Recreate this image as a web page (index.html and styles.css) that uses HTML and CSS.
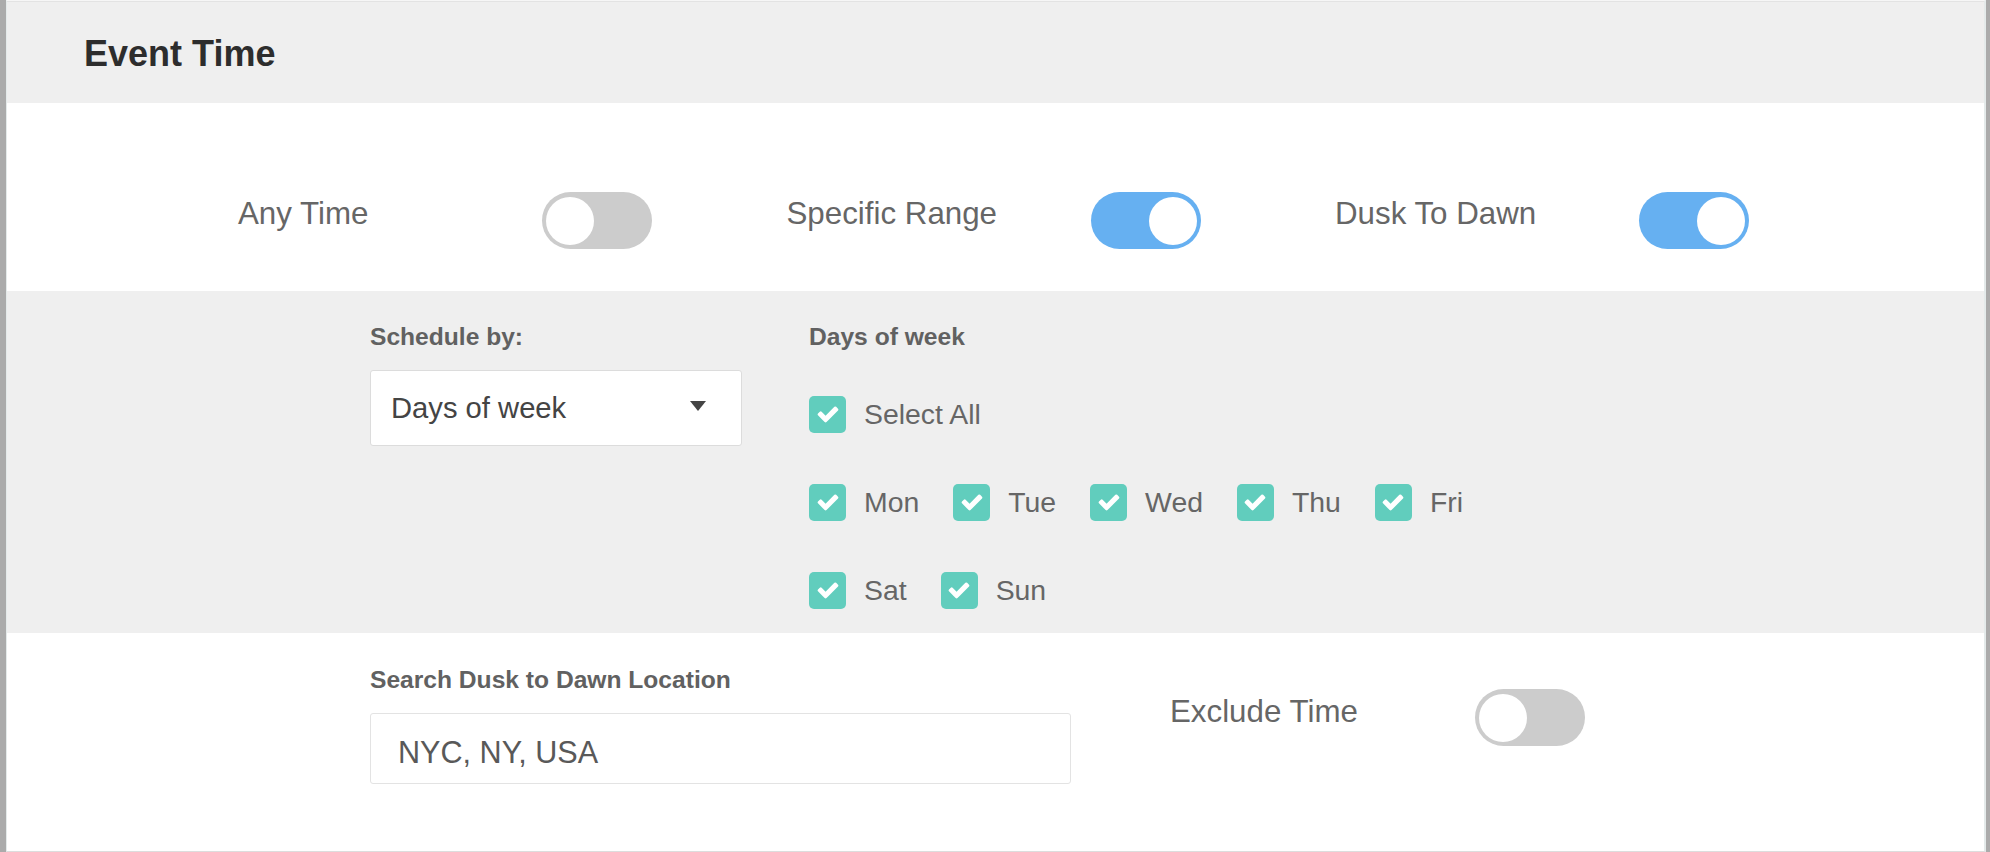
FILE: index.html
```html
<!DOCTYPE html>
<html lang="en">
<head>
<meta charset="utf-8">
<title>Event Time</title>
<link rel="stylesheet" href="styles.css">
</head>
<body>
<div class="panel">
  <div class="panel-head">
    <h2 class="title">Event Time</h2>
  </div>

  <div class="modes">
    <div class="mode">
      <span class="mode-label">Any Time</span>
      <span class="toggle"><span class="knob"></span></span>
    </div>
    <div class="mode">
      <span class="mode-label">Specific Range</span>
      <span class="toggle on"><span class="knob"></span></span>
    </div>
    <div class="mode">
      <span class="mode-label">Dusk To Dawn</span>
      <span class="toggle on"><span class="knob"></span></span>
    </div>
  </div>

  <div class="schedule">
    <div class="sched-by">
      <div class="field-label">Schedule by:</div>
      <div class="select">
        <span>Days of week</span>
        <span class="caret"></span>
      </div>
    </div>
    <div class="days">
      <div class="field-label">Days of week</div>
      <div class="check-row">
        <span class="check"><span class="box"><svg viewBox="0 0 1792 1792" class="tick"><path d="M1671 566q0 40-28 68l-724 724-136 136q-28 28-68 28t-68-28l-136-136-362-362q-28-28-28-68t28-68l136-136q28-28 68-28t68 28l294 295 656-657q28-28 68-28t68 28l136 136q28 28 28 68z"/></svg></span><span class="check-text">Select All</span></span>
      </div>
      <div class="check-row">
        <span class="check"><span class="box"><svg viewBox="0 0 1792 1792" class="tick"><path d="M1671 566q0 40-28 68l-724 724-136 136q-28 28-68 28t-68-28l-136-136-362-362q-28-28-28-68t28-68l136-136q28-28 68-28t68 28l294 295 656-657q28-28 68-28t68 28l136 136q28 28 28 68z"/></svg></span><span class="check-text">Mon</span></span>
        <span class="check"><span class="box"><svg viewBox="0 0 1792 1792" class="tick"><path d="M1671 566q0 40-28 68l-724 724-136 136q-28 28-68 28t-68-28l-136-136-362-362q-28-28-28-68t28-68l136-136q28-28 68-28t68 28l294 295 656-657q28-28 68-28t68 28l136 136q28 28 28 68z"/></svg></span><span class="check-text">Tue</span></span>
        <span class="check"><span class="box"><svg viewBox="0 0 1792 1792" class="tick"><path d="M1671 566q0 40-28 68l-724 724-136 136q-28 28-68 28t-68-28l-136-136-362-362q-28-28-28-68t28-68l136-136q28-28 68-28t68 28l294 295 656-657q28-28 68-28t68 28l136 136q28 28 28 68z"/></svg></span><span class="check-text">Wed</span></span>
        <span class="check"><span class="box"><svg viewBox="0 0 1792 1792" class="tick"><path d="M1671 566q0 40-28 68l-724 724-136 136q-28 28-68 28t-68-28l-136-136-362-362q-28-28-28-68t28-68l136-136q28-28 68-28t68 28l294 295 656-657q28-28 68-28t68 28l136 136q28 28 28 68z"/></svg></span><span class="check-text">Thu</span></span>
        <span class="check"><span class="box"><svg viewBox="0 0 1792 1792" class="tick"><path d="M1671 566q0 40-28 68l-724 724-136 136q-28 28-68 28t-68-28l-136-136-362-362q-28-28-28-68t28-68l136-136q28-28 68-28t68 28l294 295 656-657q28-28 68-28t68 28l136 136q28 28 28 68z"/></svg></span><span class="check-text">Fri</span></span>
      </div>
      <div class="check-row">
        <span class="check"><span class="box"><svg viewBox="0 0 1792 1792" class="tick"><path d="M1671 566q0 40-28 68l-724 724-136 136q-28 28-68 28t-68-28l-136-136-362-362q-28-28-28-68t28-68l136-136q28-28 68-28t68 28l294 295 656-657q28-28 68-28t68 28l136 136q28 28 28 68z"/></svg></span><span class="check-text">Sat</span></span>
        <span class="check"><span class="box"><svg viewBox="0 0 1792 1792" class="tick"><path d="M1671 566q0 40-28 68l-724 724-136 136q-28 28-68 28t-68-28l-136-136-362-362q-28-28-28-68t28-68l136-136q28-28 68-28t68 28l294 295 656-657q28-28 68-28t68 28l136 136q28 28 28 68z"/></svg></span><span class="check-text">Sun</span></span>
      </div>
    </div>
  </div>

  <div class="location">
    <div class="loc-field">
      <div class="field-label">Search Dusk to Dawn Location</div>
      <input class="text-input" type="text" value="NYC, NY, USA">
    </div>
    <div class="mode exclude">
      <span class="mode-label">Exclude Time</span>
      <span class="toggle"><span class="knob"></span></span>
    </div>
  </div>
</div>
</body>
</html>
```

FILE: styles.css
```css
html, body {
  margin: 0;
  padding: 0;
}

body {
  background: #ababab;
  font-family: "Liberation Sans", Arial, Helvetica, sans-serif;
  height: 852px;
  overflow: hidden;
}

.panel {
  margin: 0 4px 0 6px;
  height: 852px;
  box-sizing: border-box;
  background: #ffffff;
  border-top: 1px solid #f6f6f6;
  border-left: 1px solid #e4eaea;
  border-right: 2px solid #e4eaea;
  border-bottom: 1px solid #dddddd;
}

.panel-head {
  background: #efefef;
  border-top: 1px solid #e3e3e3;
  height: 101px;
  box-sizing: content-box;
  padding: 0 0 0 77px;
}

.title {
  margin: 0;
  padding-top: 32px;
  font-size: 36px;
  line-height: 40px;
  font-weight: bold;
  color: #2d2d2d;
}

.modes {
  display: grid;
  grid-template-columns: repeat(3, 548.5px);
  padding: 89px 0 42px 231px;
}

.mode {
  display: flex;
  align-items: flex-start;
}

.mode-label {
  width: 304px;
  flex: none;
  font-size: 31.3px;
  line-height: 44px;
  color: #666666;
}

.toggle {
  width: 110px;
  height: 57px;
  box-sizing: border-box;
  border-radius: 29px;
  background: #cccccc;
  display: flex;
  align-items: center;
  justify-content: flex-start;
  padding: 0 4px;
  flex: none;
}

.toggle.on {
  background: #66b0f1;
  justify-content: flex-end;
}

.knob {
  width: 48px;
  height: 48px;
  border-radius: 50%;
  background: #ffffff;
}

.schedule {
  background: #efefef;
  height: 342px;
  box-sizing: border-box;
  padding: 29px 0 0 363px;
  display: flex;
  align-items: flex-start;
}

.field-label {
  font-size: 24.6px;
  line-height: 34px;
  font-weight: bold;
  color: #616161;
  margin-bottom: 16px;
}

.sched-by {
  width: 372px;
  margin-right: 67px;
  flex: none;
}

.select {
  width: 372px;
  height: 76px;
  box-sizing: border-box;
  border: 1px solid #dcdcdc;
  border-radius: 3px;
  background: #ffffff;
  display: flex;
  align-items: center;
  justify-content: space-between;
  padding: 0 35px 0 20px;
  font-size: 29.2px;
  color: #444444;
}

.caret {
  width: 0;
  height: 0;
  border-left: 8px solid transparent;
  border-right: 8px solid transparent;
  border-top: 10px solid #444444;
  margin-bottom: 4px;
}

.days {
  flex: none;
}

.check-row {
  height: 88px;
  display: flex;
  align-items: center;
}

.check {
  display: flex;
  align-items: center;
  margin-right: 34px;
}

.box {
  width: 37px;
  height: 37px;
  border-radius: 5px;
  background: #61cdbd;
  display: flex;
  align-items: center;
  justify-content: center;
  margin-right: 18px;
  flex: none;
}

.tick {
  width: 24px;
  height: 24px;
  fill: #ffffff;
}

.check-text {
  font-size: 28.4px;
  color: #666666;
}

.location {
  display: flex;
  align-items: flex-start;
  padding: 30px 0 0 363px;
}

.loc-field {
  width: 701px;
  flex: none;
}

.text-input {
  display: block;
  width: 701px;
  height: 71px;
  box-sizing: border-box;
  margin: 0;
  border: 1px solid #e3e3e3;
  border-radius: 3px;
  background: #ffffff;
  padding: 8px 25px 0 27px;
  font-family: "Liberation Sans", Arial, Helvetica, sans-serif;
  font-size: 30.6px;
  color: #595959;
  outline: none;
}

.exclude {
  margin-left: 99px;
  margin-top: 26px;
}

.exclude .mode-label {
  width: 305px;
  padding-top: 1px;
}
```
